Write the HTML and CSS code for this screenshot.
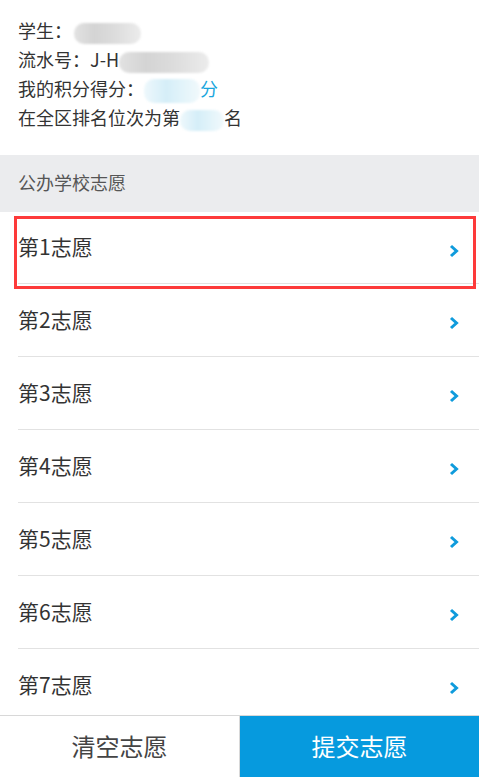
FILE: index.html
```html
<!DOCTYPE html>
<html lang="zh-CN">
<head>
    <meta charset="UTF-8">
    <meta name="viewport" content="width=device-width, initial-scale=1.0">
    <title>志愿填报</title>
    <link rel="stylesheet" href="styles.css">
</head>
<body>
    <div class="page">
        <div class="info">
            <div>学生：<span class="mask mask-name"></span></div>
            <div>流水号：J-H<span class="mask mask-serial"></span></div>
            <div>我的积分得分：<span class="mask mask-blue mask-score"></span><span class="unit">分</span></div>
            <div>在全区排名位次为第<span class="mask mask-blue mask-rank"></span>名</div>
        </div>

        <div class="group-title">公办学校志愿</div>

        <div class="choices">
            <div class="choice active">
                <span>第1志愿</span>
                <svg class="arrow" width="10" height="14" viewBox="0 0 10 14"><polyline points="2,2 7.5,7 2,12" /></svg>
            </div>
            <div class="choice">
                <span>第2志愿</span>
                <svg class="arrow" width="10" height="14" viewBox="0 0 10 14"><polyline points="2,2 7.5,7 2,12" /></svg>
            </div>
            <div class="choice">
                <span>第3志愿</span>
                <svg class="arrow" width="10" height="14" viewBox="0 0 10 14"><polyline points="2,2 7.5,7 2,12" /></svg>
            </div>
            <div class="choice">
                <span>第4志愿</span>
                <svg class="arrow" width="10" height="14" viewBox="0 0 10 14"><polyline points="2,2 7.5,7 2,12" /></svg>
            </div>
            <div class="choice">
                <span>第5志愿</span>
                <svg class="arrow" width="10" height="14" viewBox="0 0 10 14"><polyline points="2,2 7.5,7 2,12" /></svg>
            </div>
            <div class="choice">
                <span>第6志愿</span>
                <svg class="arrow" width="10" height="14" viewBox="0 0 10 14"><polyline points="2,2 7.5,7 2,12" /></svg>
            </div>
            <div class="choice">
                <span>第7志愿</span>
                <svg class="arrow" width="10" height="14" viewBox="0 0 10 14"><polyline points="2,2 7.5,7 2,12" /></svg>
            </div>
        </div>

        <div class="actions">
            <button class="btn-clear">清空志愿</button>
            <button class="btn-submit">提交志愿</button>
        </div>
    </div>
</body>
</html>
```

FILE: styles.css
```css
html, body {
    margin: 0;
    padding: 0;
}

body {
    font-family: "Noto Sans CJK SC", "Noto Sans", sans-serif;
    color: #333;
    background: #fff;
}

.page {
    display: flex;
    flex-direction: column;
    height: 100vh;
    overflow: hidden;
}

/* 学生信息 */
.info {
    padding: 16px 18px 23px;
    font-size: 18px;
    line-height: 29px;
}

.mask {
    display: inline-block;
    height: 21px;
    vertical-align: middle;
    border-radius: 10px;
    background: linear-gradient(90deg, #e2e2e2 0%, #d4d4d4 30%, #dcdcdc 60%, #ececec 100%);
    filter: blur(1px);
}

.mask-blue {
    background: linear-gradient(90deg, #eef8fc 0%, #d5eef8 40%, #e3f4fa 70%, #f1f9fc 100%);
}

.mask-name {
    width: 67px;
    margin-left: 2px;
}

.mask-serial {
    width: 90px;
}

.mask-score {
    width: 56px;
    height: 24px;
}

.mask-rank {
    width: 44px;
}

.unit {
    color: #1aa6dd;
}

/* 分组标题 */
.group-title {
    background: #ebecee;
    height: 57px;
    line-height: 55px;
    padding-left: 18px;
    font-size: 18px;
    color: #555;
}

/* 志愿列表 */
.choices {
    flex: 1;
    overflow: hidden;
}

.choice {
    position: relative;
    display: flex;
    align-items: center;
    justify-content: space-between;
    box-sizing: border-box;
    height: 73px;
    margin-left: 18px;
    padding-right: 20px;
    padding-bottom: 3px;
    border-bottom: 1px solid #e2e2e2;
    font-size: 21px;
    color: #333;
}

.choice:first-child {
    height: 72px;
}

.choice.active::after {
    content: "";
    position: absolute;
    left: -4px;
    right: 3px;
    top: 4px;
    bottom: -6px;
    border: 3px solid #fd3a3a;
}

.arrow {
    margin-top: 9px;
}

.arrow polyline {
    fill: none;
    stroke: #0f9bdc;
    stroke-width: 3;
}

/* 底部按钮 */
.actions {
    display: flex;
    height: 62px;
    flex-shrink: 0;
    border-top: 1px solid #d8d8d8;
    box-sizing: border-box;
}

.actions button {
    flex: 1;
    border: none;
    margin: 0;
    padding: 0 0 2px;
    font-family: inherit;
    font-size: 24px;
    cursor: pointer;
}

.btn-clear {
    background: #fff;
    color: #444;
    border-right: 1px solid #d8d8d8 !important;
}

.btn-submit {
    background: #069ade;
    color: #fff;
}
```
